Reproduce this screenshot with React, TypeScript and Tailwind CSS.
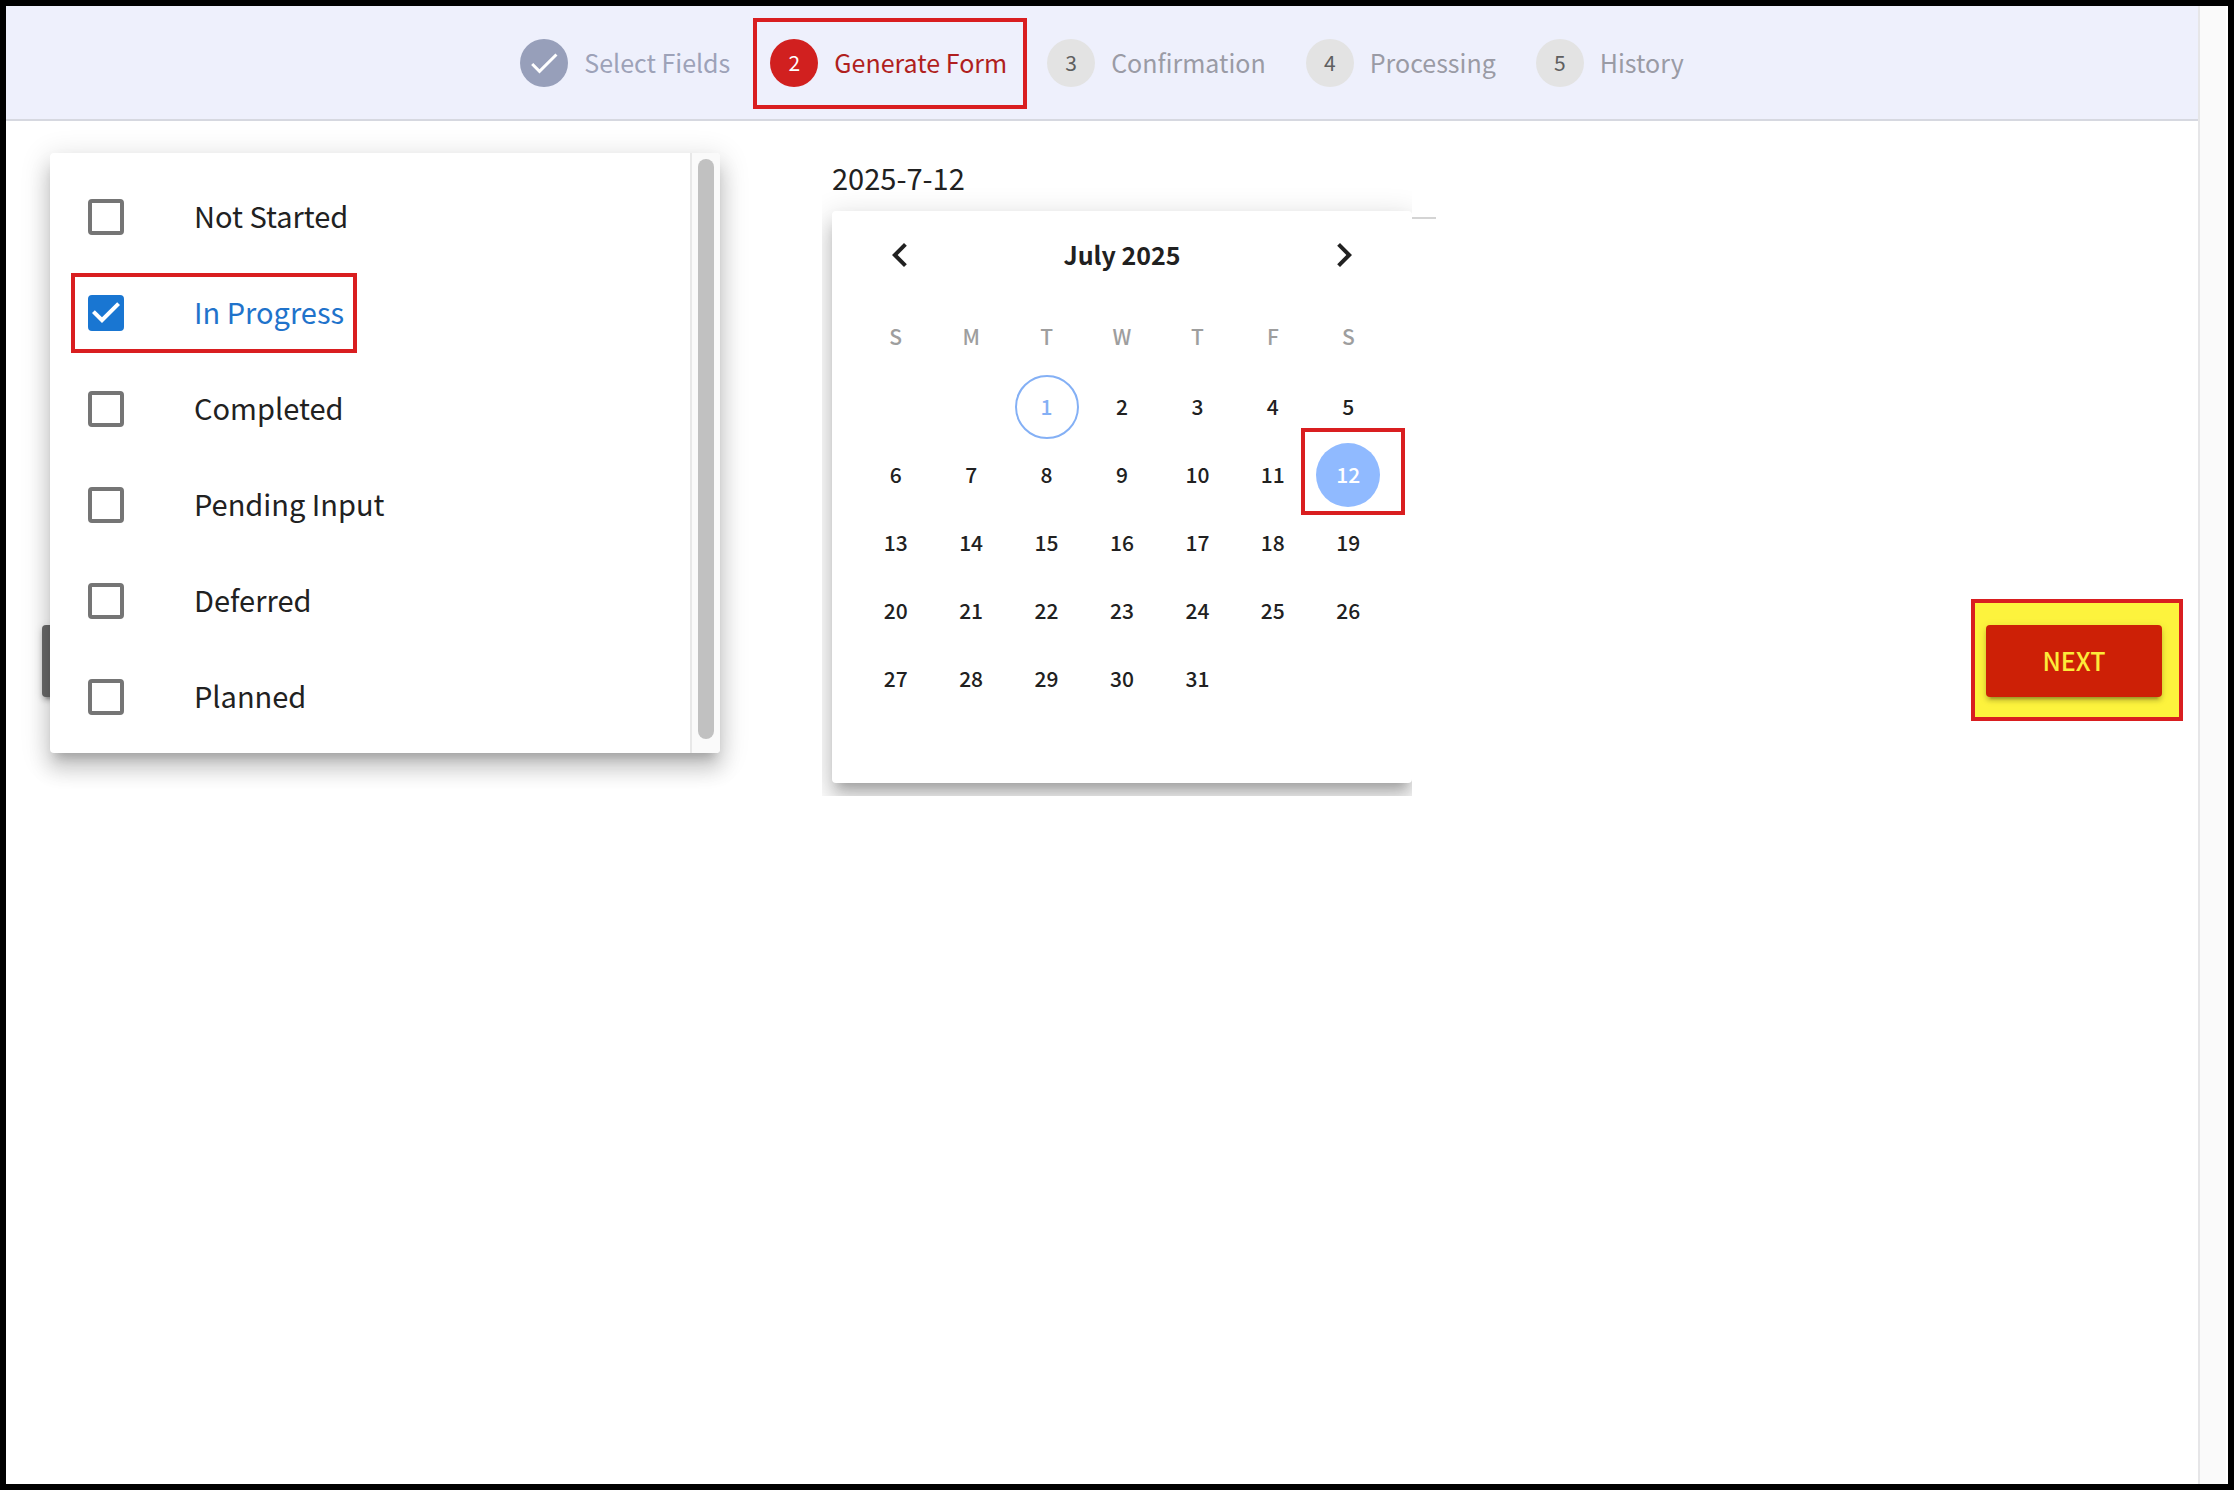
import { useState } from "react";
import clsx from "clsx";

const steps = ["Select Fields", "Generate Form", "Confirmation", "Processing", "History"];
const activeStep = 1;

const statuses = ["Not Started", "In Progress", "Completed", "Pending Input", "Deferred", "Planned"];

const weekdays = ["S", "M", "T", "W", "T", "F", "S"];
const firstWeekday = 2; // July 2025 starts on a Tuesday
const daysInMonth = 31;
const today = 1;

const paperShadow =
  "shadow-[0_10px_10px_-6px_rgba(0,0,0,0.2),0_16px_20px_2px_rgba(0,0,0,0.14),0_6px_28px_4px_rgba(0,0,0,0.12)]";
const buttonShadow =
  "shadow-[0_6px_2px_-4px_rgba(0,0,0,0.2),0_4px_4px_0_rgba(0,0,0,0.14),0_2px_10px_0_rgba(0,0,0,0.12)]";

function Highlight({ className }: { className: string }) {
  return <span aria-hidden className={clsx("pointer-events-none absolute border-4 border-[#d91e20]", className)} />;
}

function Stepper() {
  return (
    <header className="border-b-2 border-[#d6d8e0] bg-[#eef0fc] py-8">
      <ol className="flex justify-center gap-10">
        {steps.map((label, i) => {
          const done = i < activeStep;
          const active = i === activeStep;
          return (
            <li
              key={label}
              aria-current={active ? "step" : undefined}
              className="relative flex items-center gap-4 text-[25px] leading-[49px]"
            >
              <span
                className={clsx(
                  "flex size-12 items-center justify-center rounded-full text-[21px]",
                  done && "bg-[#979fba]",
                  active && "bg-[#d1201f] text-white",
                  !done && !active && "bg-[#e3e3e3] text-[#5f5f5f]",
                )}
              >
                {done ? (
                  <svg viewBox="0 0 24 24" className="size-9 fill-white" aria-hidden>
                    <path d="M9 16.17L4.83 12l-1.42 1.41L9 19 21 7l-1.41-1.41z" />
                  </svg>
                ) : (
                  i + 1
                )}
              </span>
              <span
                className={clsx(
                  done && "text-[#9da2b8]",
                  active && "text-[#b01f20]",
                  !done && !active && "text-[#9a9ba5]",
                )}
              >
                {label}
              </span>
              {active && <Highlight className="-top-5 -right-5 -bottom-[22px] -left-[17px]" />}
            </li>
          );
        })}
      </ol>
    </header>
  );
}

function StatusMenu() {
  const [selected, setSelected] = useState<string[]>(["In Progress"]);

  const toggle = (status: string) =>
    setSelected((prev) => (prev.includes(status) ? prev.filter((s) => s !== status) : [...prev, status]));

  return (
    <div className="relative w-[670px] shrink-0">
      {/* mostly covered by the open menu */}
      <button
        type="button"
        aria-label="Back"
        className={clsx("absolute bottom-14 -left-2 h-[72px] w-44 rounded bg-[#6a6a6a]", buttonShadow)}
      />
      <div className={clsx("relative flex rounded bg-white", paperShadow)}>
        <ul className="flex-1 pt-4 pb-2">
          {statuses.map((status) => {
            const checked = selected.includes(status);
            return (
              <li key={status} className="relative flex">
                <label
                  className={clsx(
                    "flex h-24 flex-1 items-center gap-[70px] pl-[38px] text-[29px]",
                    checked ? "text-[#1f73cb]" : "text-[#212121]",
                  )}
                >
                  <span className="relative size-9">
                    <input
                      type="checkbox"
                      checked={checked}
                      onChange={() => toggle(status)}
                      className="block size-9 appearance-none rounded border-4 border-[#757575] checked:border-[#1976d2] checked:bg-[#1976d2]"
                    />
                    {checked && (
                      <svg viewBox="3 3 18 18" className="pointer-events-none absolute inset-0 size-9 fill-white" aria-hidden>
                        <path d="M10 17l-5-5 1.41-1.41L10 14.17l7.59-7.59L19 8l-9 9z" />
                      </svg>
                    )}
                  </span>
                  <span className="pb-[2px]">{status}</span>
                </label>
                {status === "In Progress" && <Highlight className="inset-y-2 left-[21px] w-[286px]" />}
              </li>
            );
          })}
        </ul>
        <div className="flex w-[30px] justify-center rounded-r border-l-2 border-[#e8e8e8] bg-[#fafafa] pt-[6px] pb-[14px]">
          <div className="w-4 rounded-full bg-[#c1c1c1]" />
        </div>
      </div>
    </div>
  );
}

function Calendar({ selected, onSelect }: { selected: number; onSelect: (day: number) => void }) {
  const weeks: (number | null)[][] = Array.from({ length: 5 }, (_, w) =>
    Array.from({ length: 7 }, (_, d) => {
      const day = w * 7 + d - firstWeekday + 1;
      return day >= 1 && day <= daysInMonth ? day : null;
    }),
  );

  return (
    <div className={clsx("rounded bg-white pb-[70px] text-[#212121]", paperShadow)}>
      <div className="flex h-[90px] items-center justify-between px-11 pb-[2px]">
        <button type="button" aria-label="Previous month">
          <svg viewBox="0 0 24 24" className="size-12 fill-current" aria-hidden>
            <path d="M15.41 7.41L14 6l-6 6 6 6 1.41-1.41L10.83 12z" />
          </svg>
        </button>
        <h2 className="text-[25px] font-bold">July 2025</h2>
        <button type="button" aria-label="Next month">
          <svg viewBox="0 0 24 24" className="size-12 fill-current" aria-hidden>
            <path d="M10 6L8.59 7.41 13.17 12l-4.58 4.59L10 18l6-6z" />
          </svg>
        </button>
      </div>
      <div className="px-[26px]">
        <table className="w-full table-fixed text-center text-[21px]">
          <thead>
            <tr className="h-[72px] text-[#9e9e9e]">
              {weekdays.map((day, i) => (
                <th key={i} scope="col" className="p-0 font-medium">
                  {day}
                </th>
              ))}
            </tr>
          </thead>
          <tbody>
            {weeks.map((week, w) => (
              <tr key={w} className="h-[68px]">
                {week.map((day, d) => (
                  <td key={d} className="p-0">
                    {day && (
                      <div className="relative mx-auto size-16">
                        <button
                          type="button"
                          onClick={() => onSelect(day)}
                          className={clsx(
                            "size-16 rounded-full font-medium",
                            day === selected && "bg-[#90baff] text-white",
                            day === today && day !== selected && "border-2 border-[#84b0f5] text-[#84b0f5]",
                          )}
                        >
                          {day}
                        </button>
                        {day === 12 && <Highlight className="-top-[15px] -right-[25px] -bottom-2 -left-[15px]" />}
                      </div>
                    )}
                  </td>
                ))}
              </tr>
            ))}
          </tbody>
        </table>
      </div>
    </div>
  );
}

function DateField() {
  const [day, setDay] = useState(12);

  return (
    <div className="ml-[102px] flex items-start">
      <div className="w-[590px] overflow-hidden pb-[13px] pl-[10px]">
        <input
          aria-label="Date"
          readOnly
          value={`2025-7-${day}`}
          className="block h-[58px] w-full bg-transparent pb-[10px] text-[29px] text-[#212121] outline-none"
        />
        <Calendar selected={day} onSelect={setDay} />
      </div>
      <div className="mt-16 h-[2px] w-6 bg-[#d4d4d4]" />
    </div>
  );
}

export default function App() {
  return (
    <div className="flex min-h-screen border-6 border-black bg-white font-['Noto_Sans_CJK_SC','Noto_Sans',sans-serif]">
      <div className="min-w-0 flex-1">
        <Stepper />
        <main className="flex items-start pt-8 pr-[15px] pl-11">
          <StatusMenu />
          <DateField />
          <div className="mt-[446px] ml-auto border-4 border-[#d91e20] bg-[#fdf33d] pt-[22px] pr-[17px] pb-5 pl-[11px]">
            <button
              type="button"
              className={clsx(
                "block h-[72px] w-44 rounded bg-[#cd2006] text-[25px] font-medium text-[#fdeb3a]",
                buttonShadow,
              )}
            >
              NEXT
            </button>
          </div>
        </main>
      </div>
      <div className="w-[30px] border-r-2 border-l-2 border-r-white border-l-[#e6e6e8] bg-[#fafafa]" />
    </div>
  );
}
